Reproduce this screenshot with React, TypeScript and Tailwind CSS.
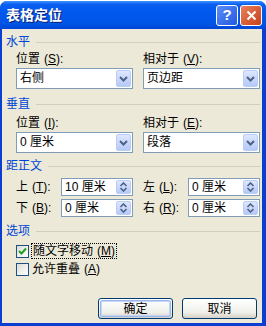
import React from "react";

const font = "font-['Tahoma','Liberation_Sans','Noto_Sans_CJK_SC',sans-serif]";

function Key({ k }: { k: string }) {
  return (
    <span className="ml-[4px]">
      (<span className="underline">{k}</span>)
    </span>
  );
}

function SectionHead({ text }: { text: string }) {
  return (
    <div className="flex items-center gap-[6px] h-[13px] pl-[4px] pr-[2px]">
      <span className="text-[#0046d5] text-[12px] leading-[13px]">{text}</span>
      <div className="flex-1 h-px bg-[#d0d0bf]" />
    </div>
  );
}

function Chevron() {
  return (
    <svg width="9" height="6" viewBox="0 0 9 6">
      <path d="M1 1 L4.5 4.5 L8 1" fill="none" stroke="#4d6185" strokeWidth="2" />
    </svg>
  );
}

function Select({ value }: { value: string }) {
  return (
    <div className="flex items-center h-[21px] border border-[#7f9db9] bg-white pl-[3px] pr-[1px]">
      <span className="flex-1 text-[12px] text-black leading-[19px]">{value}</span>
      <div className="w-[15px] h-[17px] rounded-[2px] border border-[#b9cdf7] bg-[linear-gradient(180deg,#dde7fd,#b5c8f7)] flex items-center justify-center">
        <Chevron />
      </div>
    </div>
  );
}

function Spin({ value }: { value: string }) {
  return (
    <div className="flex items-center h-[18px] border border-[#7f9db9] bg-white pl-[3px] pr-[1px]">
      <span className="flex-1 text-[12px] text-black leading-[16px]">{value}</span>
      <div className="w-[15px] h-[14px] rounded-[2px] border border-[#b9cdf7] bg-[linear-gradient(180deg,#dde7fd,#b5c8f7)] flex items-center justify-center">
        <svg width="9" height="10" viewBox="0 0 9 10">
          <path d="M1.5 4 L4.5 1 L7.5 4" fill="none" stroke="#4d6185" strokeWidth="1.6" />
          <path d="M1.5 6 L4.5 9 L7.5 6" fill="none" stroke="#4d6185" strokeWidth="1.6" />
        </svg>
      </div>
    </div>
  );
}

function Check({ on }: { on?: boolean }) {
  return (
    <div className="w-[13px] h-[13px] border border-[#1c5180] bg-[linear-gradient(135deg,#dcdcd7,#ffffff)] flex items-center justify-center">
      {on && (
        <svg width="9" height="9" viewBox="0 0 9 9">
          <path d="M1 4 L3.5 6.5 L8 1.5" fill="none" stroke="#21a121" strokeWidth="2" />
        </svg>
      )}
    </div>
  );
}

function XpButton({ label, primary }: { label: string; primary?: boolean }) {
  return (
    <div className="w-[75px] h-[21px] rounded-[3px] border border-[#003c74] bg-[linear-gradient(180deg,#ffffff,#f0f0ea_70%,#d6d0c5)] p-px">
      <div
        className={
          "h-full rounded-[2px] flex items-center justify-center text-[12px] text-black " +
          (primary ? "border border-[#9db9eb] shadow-[inset_0_0_0_1px_#c3d4f6]" : "")
        }
      >
        {label}
      </div>
    </div>
  );
}

export default function App() {
  return (
    <div className={"w-[266px] h-[326px] bg-white overflow-hidden " + font}>
      <div className="flex flex-col h-full rounded-t-[7px] bg-[#0a3fd0] pl-[2px] pr-[4px] pb-[4px] mt-px">
        {/* title bar */}
        <div className="h-[28px] shrink-0 -ml-[2px] -mr-[4px] rounded-t-[7px] bg-[linear-gradient(180deg,#3d95ff_0%,#0a5ff0_12%,#0058ee_40%,#0055e5_80%,#0046d5_100%)] flex items-center pl-[6px] pr-[4px]">
          <span className="flex-1 text-white font-bold text-[14px] [text-shadow:1px_1px_0_#0a1d6e]">表格定位</span>
          <div className="flex gap-[2px]">
            <div className="w-[22px] h-[21px] rounded-[3px] border border-white bg-[linear-gradient(135deg,#5d8ef8,#2258e0)] flex items-center justify-center text-white font-bold text-[15px]">
              ?
            </div>
            <div className="w-[22px] h-[21px] rounded-[3px] border border-white bg-[linear-gradient(135deg,#e8825d,#c7401a)] flex items-center justify-center">
              <svg width="11" height="11" viewBox="0 0 11 11">
                <path d="M1.5 1.5 L9.5 9.5 M9.5 1.5 L1.5 9.5" stroke="#fff" strokeWidth="2" />
              </svg>
            </div>
          </div>
        </div>

        {/* body */}
        <div className="flex-1 bg-[#ece9d8] flex flex-col pt-[7px] text-[12px] text-black">
          <SectionHead text="水平" />
          <div className="grid grid-cols-2 gap-x-[10px] pl-[14px] pr-[2px] mt-[3px]">
            <div className="flex flex-col gap-[2px]">
              <div className="h-[14px] leading-[14px]">位置<Key k="S" />:</div>
              <Select value="右侧" />
            </div>
            <div className="flex flex-col gap-[2px]">
              <div className="h-[14px] leading-[14px]">相对于<Key k="V" />:</div>
              <Select value="页边距" />
            </div>
          </div>

          <div className="mt-[9px]">
            <SectionHead text="垂直" />
          </div>
          <div className="grid grid-cols-2 gap-x-[10px] pl-[14px] pr-[2px] mt-[5px]">
            <div className="flex flex-col gap-[2px]">
              <div className="h-[14px] leading-[14px]">位置<Key k="I" />:</div>
              <Select value="0 厘米" />
            </div>
            <div className="flex flex-col gap-[2px]">
              <div className="h-[14px] leading-[14px]">相对于<Key k="E" />:</div>
              <Select value="段落" />
            </div>
          </div>

          <div className="mt-[7px]">
            <SectionHead text="距正文" />
          </div>
          <div className="grid grid-cols-2 gap-x-[10px] gap-y-[3px] pl-[14px] pr-[2px] mt-[5px]">
            <div className="flex items-center">
              <span className="w-[45px]">上<Key k="T" />:</span>
              <div className="flex-1"><Spin value="10 厘米" /></div>
            </div>
            <div className="flex items-center">
              <span className="w-[45px]">左<Key k="L" />:</span>
              <div className="flex-1"><Spin value="0 厘米" /></div>
            </div>
            <div className="flex items-center">
              <span className="w-[45px]">下<Key k="B" />:</span>
              <div className="flex-1"><Spin value="0 厘米" /></div>
            </div>
            <div className="flex items-center">
              <span className="w-[45px]">右<Key k="R" />:</span>
              <div className="flex-1"><Spin value="0 厘米" /></div>
            </div>
          </div>

          <div className="mt-[8px]">
            <SectionHead text="选项" />
          </div>
          <div className="flex flex-col gap-[3px] pl-[14px] mt-[5px]">
            <div className="flex items-center gap-[2px]">
              <Check on />
              <span className="border border-dotted border-black px-px leading-[14px]">随文字移动<Key k="M" /></span>
            </div>
            <div className="flex items-center gap-[3px]">
              <Check />
              <span className="leading-[14px]">允许重叠<Key k="A" /></span>
            </div>
          </div>

          <div className="flex-1" />
          <div className="flex justify-end gap-[9px] pr-[5px] pb-[4px]">
            <XpButton label="确定" primary />
            <XpButton label="取消" />
          </div>
        </div>
      </div>
    </div>
  );
}
